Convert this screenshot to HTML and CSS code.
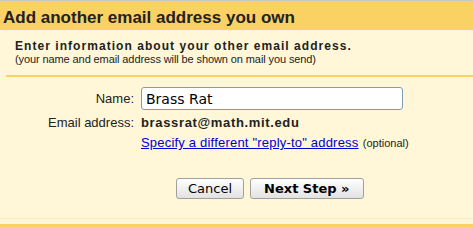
FILE: index.html
```html
<!DOCTYPE html>
<html>
  <head>
    <meta charset="utf-8" />
    <link rel="stylesheet" href="styles.css">
  </head>
  <body>
    <div class="dialog">
      <div class="title-bar">Add another email address you own</div>
      <div class="panel">
        <div class="intro">
          <div class="intro-head">Enter information about your other email address.</div>
          <div class="intro-note">(your name and email address will be shown on mail you send)</div>
        </div>
        <div class="divider"></div>
        <div class="form">
          <label class="label" for="name">Name:</label>
          <div class="field"><input class="text-input" id="name" type="text" value="Brass Rat" /></div>
          <div class="label">Email address:</div>
          <div class="value">brassrat@math.mit.edu</div>
          <div></div>
          <div class="value"><a class="link" href="#">Specify a different "reply-to" address</a> <span class="optional">(optional)</span></div>
          <div></div>
          <div class="buttons">
            <button class="btn">Cancel</button>
            <button class="btn btn-main">Next Step &raquo;</button>
          </div>
        </div>
        <div class="foot-line"></div>
      </div>
      <div class="bottom-bar"></div>
    </div>
  </body>
</html>
```

FILE: styles.css
```css
/* settings dialog */
body {
  margin: 0;
  font-family: "Liberation Sans", Arial, sans-serif;
  color: #222;
  background-color: #fff7d7;
}

.dialog {
  border-top: 1px solid #c8c8c8;
}

.title-bar {
  background-color: #fad163;
  font-size: 17px;
  font-weight: bold;
  line-height: 19px;
  padding: 7px 0 3px 3px;
}

.panel {
  background-color: #fff7d7;
}

.intro {
  padding: 9px 0 0 15px;
}

.intro-head {
  font-size: 12px;
  font-weight: bold;
  letter-spacing: 1.05px;
  line-height: 14px;
}

.intro-note {
  font-size: 11px;
  line-height: 13px;
  letter-spacing: -0.1px;
}

.divider {
  height: 2px;
  background-color: #fad163;
  margin: 9px 0 0 6px;
}

.form {
  display: grid;
  grid-template-columns: 134px 262px;
  column-gap: 7px;
  row-gap: 5px;
  align-items: center;
  padding-top: 10px;
  font-size: 13px;
  line-height: 15px;
}

.label {
  text-align: right;
}

.field {
  display: flex;
}

.text-input {
  box-sizing: border-box;
  width: 262px;
  height: 23px;
  margin: 0;
  padding: 0 4px;
  border: 1px solid #7f9db9;
  border-radius: 3px;
  background: #fff;
  font-family: "DejaVu Sans", sans-serif;
  font-size: 14px;
  color: #000;
  outline: none;
}

.value {
  font-weight: bold;
  letter-spacing: 0.65px;
  white-space: nowrap;
}

.value .link,
.value .optional {
  font-weight: normal;
}

.value .link {
  letter-spacing: 0.2px;
}

.value .optional {
  letter-spacing: 0;
}

.link {
  color: #0000cc;
}

.optional {
  font-size: 11px;
}

.buttons {
  display: flex;
  gap: 6px;
  padding: 22px 0 0 35px;
}

.btn {
  height: 21px;
  padding: 0 11px;
  border: 1px solid #a0a0a0;
  border-radius: 3px;
  background: linear-gradient(#ffffff, #e2e2e2);
  font-family: "DejaVu Sans", sans-serif;
  font-size: 13px;
  color: #000;
}

.btn-main {
  font-weight: bold;
  padding: 0 13px;
}

.foot-line {
  height: 1px;
  background-color: #fcecb8;
  margin-top: 19px;
}

.bottom-bar {
  height: 3px;
  margin-top: 5px;
  background-color: #fad163;
}
```
